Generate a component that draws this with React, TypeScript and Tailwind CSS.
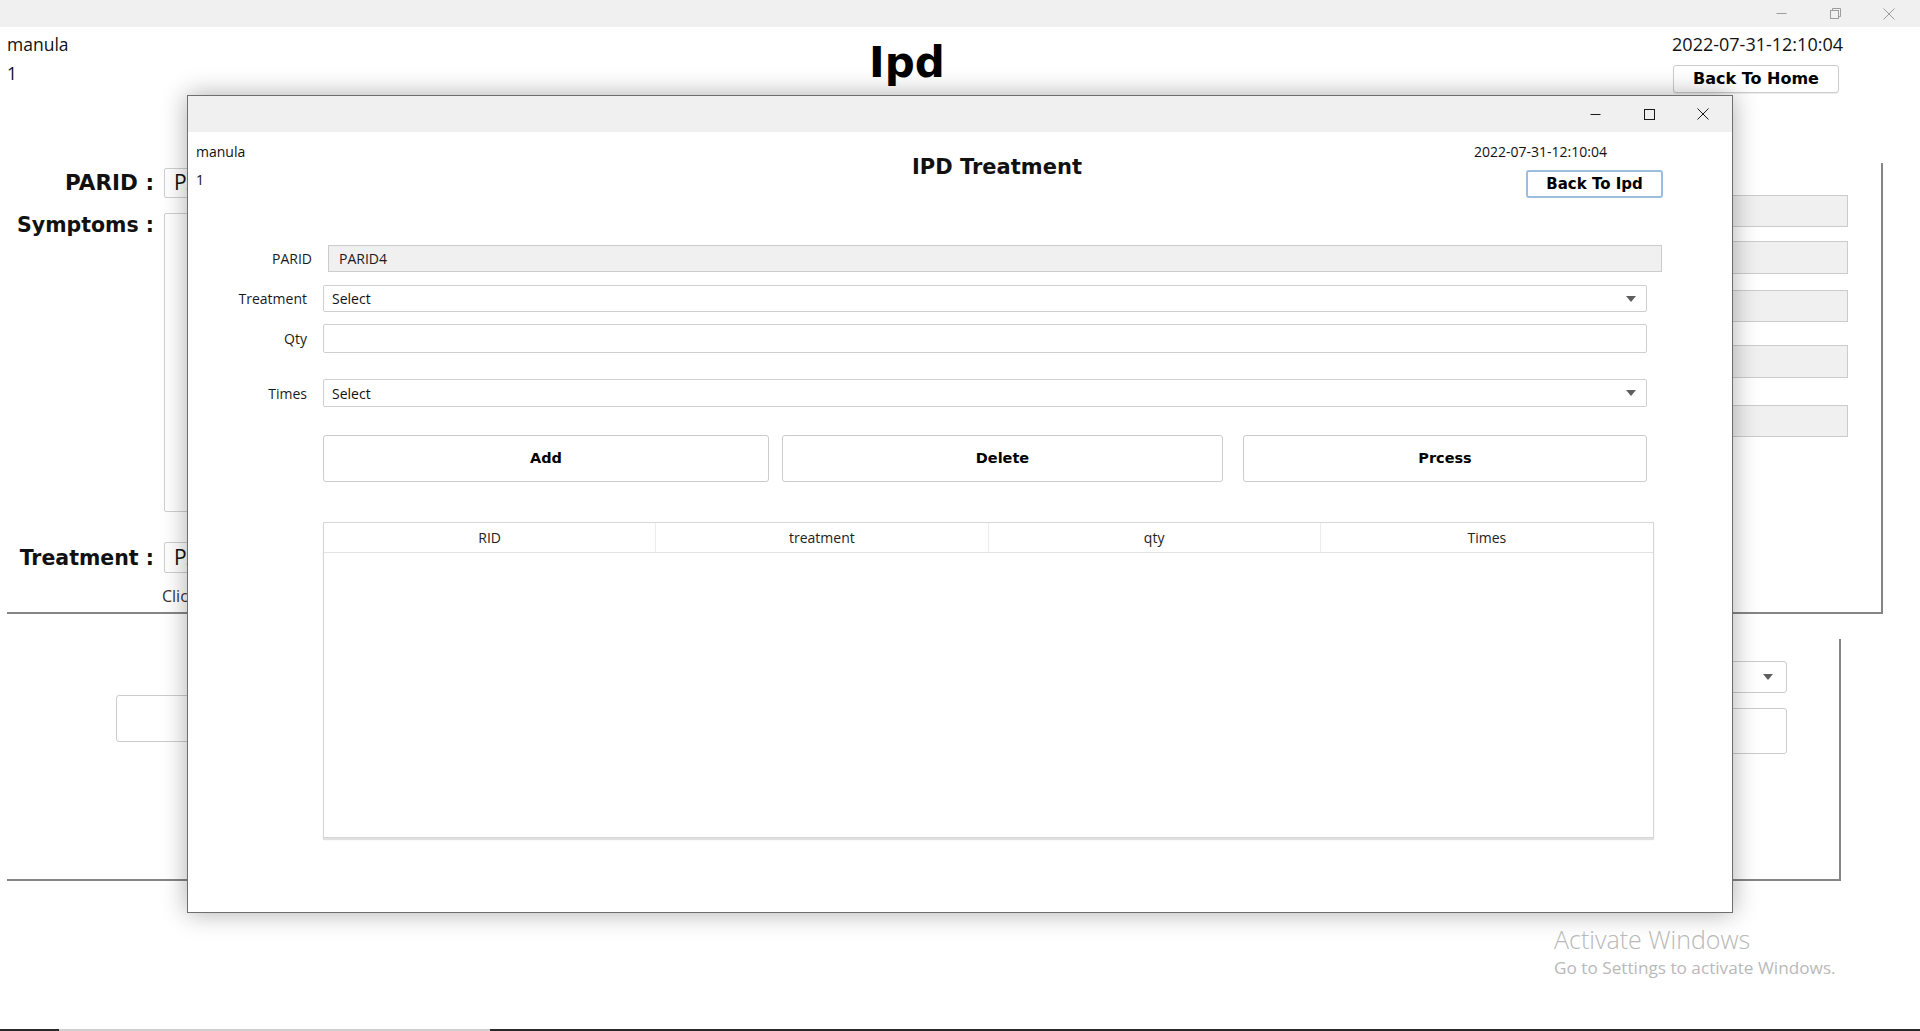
import React from 'react'

const ui = "font-['Open_Sans',sans-serif]"
const heavy = "font-['DejaVu_Sans',sans-serif] font-bold"

const Caret = () => (
    <svg width="10" height="6" viewBox="0 0 10 6">
        <path d="M0 0h10L5 6z" fill="#5e5e5e" />
    </svg>
)

// title bar buttons, grey when the window is not focused
const WinControls = ({ dim, restore }: { dim?: boolean; restore?: boolean }) => {
    const c = dim ? '#9c9c9c' : '#1a1a1a'
    return (
        <div className="flex h-full">
            <div className="w-[54px] h-full flex items-center justify-center">
                <svg width="11" height="11" viewBox="0 0 11 11">
                    <path d="M0.5 5.5h10" stroke={c} strokeWidth="1" />
                </svg>
            </div>
            <div className="w-[54px] h-full flex items-center justify-center">
                {restore ? (
                    <svg width="11" height="11" viewBox="0 0 11 11" fill="none">
                        <path d="M2.5 2.5V0.5h8v8h-2" stroke={c} strokeWidth="1" />
                        <rect x="0.5" y="2.5" width="8" height="8" stroke={c} strokeWidth="1" />
                    </svg>
                ) : (
                    <svg width="11" height="11" viewBox="0 0 11 11" fill="none">
                        <rect x="0.5" y="0.5" width="10" height="10" stroke={c} strokeWidth="1" />
                    </svg>
                )}
            </div>
            <div className="w-[54px] h-full flex items-center justify-center">
                <svg width="12" height="12" viewBox="0 0 12 12">
                    <path d="M0.5 0.5l11 11M11.5 0.5l-11 11" stroke={c} strokeWidth="1" />
                </svg>
            </div>
        </div>
    )
}

const Select = ({ w }: { w: string }) => (
    <div className={`${w} h-full ml-[16px] border border-[#cfcfcf] rounded-[2px] bg-white flex items-center justify-between pl-[8px] pr-[10px] text-[14px] text-[#111]`}>
        <span>Select</span>
        <Caret />
    </div>
)

const IpdTreatment = () => {
    const cols = ['RID', 'treatment', 'qty', 'Times']
    return (
        <div className={`${ui} absolute left-[187px] top-[95px] w-[1546px] h-[818px] border border-[#6f6f6f] bg-white shadow-[0_0_24px_rgba(0,0,0,0.32)] flex flex-col`}>
            <div className="h-[36px] bg-[#f0f0f0] flex justify-end pr-[2px]">
                <WinControls />
            </div>

            <div className="flex text-[#111]">
                <div className="w-[332px] pl-[8px] pt-[10px] text-[14px] leading-[19px]">
                    <div>manula</div>
                    <div className="mt-[9px]">1</div>
                </div>
                <div className={`${heavy} flex-1 text-center pt-[21px] text-[21px] leading-[28px]`}>IPD Treatment</div>
                <div className="w-[258px] pt-[10px] flex flex-col items-start">
                    <div className="text-[14px] leading-[19px]">2022-07-31-12:10:04</div>
                    <button className={`${heavy} mt-[9px] ml-[52px] w-[137px] h-[28px] border-2 border-[#9dbde0] rounded-[3px] bg-white text-[15px] text-black`}>
                        Back To Ipd
                    </button>
                </div>
            </div>

            <div className="flex flex-col text-[14px] text-[#1a1a1a]">
                <div className="mt-[47px] flex items-center h-[27px]">
                    <div className="w-[124px] text-right">PARID</div>
                    <div className="ml-[16px] w-[1334px] h-full bg-[#f0f0f0] border border-[#cccccc] flex items-center pl-[10px]">PARID4</div>
                </div>
                <div className="mt-[13px] flex items-center h-[27px]">
                    <div className="w-[119px] text-right">Treatment</div>
                    <Select w="w-[1324px]" />
                </div>
                <div className="mt-[12px] flex items-center h-[29px]">
                    <div className="w-[119px] text-right">Qty</div>
                    <div className="ml-[16px] w-[1324px] h-full border border-[#cfcfcf] rounded-[2px] bg-white" />
                </div>
                <div className="mt-[26px] flex items-center h-[28px]">
                    <div className="w-[119px] text-right">Times</div>
                    <Select w="w-[1324px]" />
                </div>

                <div className={`${heavy} mt-[28px] ml-[135px] flex h-[47px] text-[14.5px] text-black`}>
                    <button className="w-[446px] h-full border border-[#cccccc] rounded-[3px] bg-white">Add</button>
                    <button className="ml-[13px] w-[441px] h-full border border-[#cccccc] rounded-[3px] bg-white">Delete</button>
                    <button className="ml-[20px] w-[404px] h-full border border-[#cccccc] rounded-[3px] bg-white">Prcess</button>
                </div>

                <div className="mt-[40px] ml-[135px] w-[1331px] h-[316px] border border-[#d6d6d6] shadow-[0_2px_1px_rgba(0,0,0,0.12)] bg-white">
                    <div className="grid grid-cols-4 h-[30px] border-b border-[#e3e3e3]">
                        {cols.map((c, i) => (
                            <div key={c} className={`flex items-center justify-center text-[14px] text-[#222] ${i < 3 ? 'border-r border-[#ececec]' : ''}`}>
                                {c}
                            </div>
                        ))}
                    </div>
                </div>
            </div>
        </div>
    )
}

export default function App() {
    return (
        <div className={`${ui} relative w-[1920px] h-[1031px] overflow-hidden bg-white flex flex-col text-[#111]`}>
            <div className="h-[27px] shrink-0 bg-[#f0f0f0] flex justify-end pr-[4px]">
                <WinControls dim restore />
            </div>

            <div className="flex h-[66px] shrink-0">
                <div className="w-[869px] pl-[7px] pt-[6px] text-[17.5px] leading-[22px]">
                    <div>manula</div>
                    <div className="mt-[7px]">1</div>
                </div>
                <div className={`${heavy} pt-[11px] text-[42px] leading-[50px] text-black`}>Ipd</div>
                <div className="flex-1" />
                <div className="flex flex-col items-end pr-[77px] pt-[6px]">
                    <div className="text-[18px] leading-[22px]">2022-07-31-12:10:04</div>
                    <button className={`${heavy} mt-[10px] mr-[4px] w-[166px] h-[29px] border border-[#cdcdcd] rounded-[3px] bg-white text-[16px] text-black shadow-[0_1px_1px_rgba(0,0,0,0.08)]`}>
                        Back To Home
                    </button>
                </div>
            </div>

            {/* patient details */}
            <div className="mt-[70px] ml-[7px] w-[1876px] h-[451px] shrink-0 border-r-2 border-b-2 border-[#858585] flex justify-between">
                <div className="pt-[5px] flex flex-col">
                    <div className="flex items-center h-[30px]">
                        <div className={`${heavy} w-[147px] text-right text-[21.5px] leading-[26px]`}>PARID :</div>
                        <div className="ml-[10px] w-[520px] h-full border border-[#cfcfcf] rounded-[2px] flex items-center pl-[9px] text-[21px]">PARID4</div>
                    </div>
                    <div className="mt-[15px] flex items-start">
                        <div className={`${heavy} w-[147px] -mt-[1px] text-right text-[20.5px] leading-[26px]`}>Symptoms :</div>
                        <div className="ml-[10px] w-[520px] h-[299px] border border-[#cfcfcf] rounded-[2px]" />
                    </div>
                    <div className="mt-[30px] flex items-center h-[31px]">
                        <div className={`${heavy} w-[147px] text-right text-[20.5px] leading-[26px]`}>Treatment :</div>
                        <div className="ml-[10px] w-[520px] h-full border border-[#cfcfcf] rounded-[2px] flex items-center pl-[9px] text-[21px]">PARID4</div>
                    </div>
                    <div className="mt-[13px] ml-[155px] text-[16px] leading-[20px] text-[#333]">Click here to add treatment</div>
                </div>
                <div className="mr-[33px] flex flex-col w-[320px]">
                    <div className="mt-[32px] h-[32px] bg-[#f0f0f0] border border-[#cccccc]" />
                    <div className="mt-[14px] h-[33px] bg-[#f0f0f0] border border-[#cccccc]" />
                    <div className="mt-[16px] h-[32px] bg-[#f0f0f0] border border-[#cccccc]" />
                    <div className="mt-[23px] h-[33px] bg-[#f0f0f0] border border-[#cccccc]" />
                    <div className="mt-[27px] h-[32px] bg-[#f0f0f0] border border-[#cccccc]" />
                </div>
            </div>

            {/* admission */}
            <div className="mt-[25px] ml-[7px] w-[1834px] h-[242px] shrink-0 border-r-2 border-b-2 border-[#858585] flex justify-between">
                <div className="ml-[109px] mt-[56px] w-[380px] h-[47px] border border-[#cccccc] rounded-[3px]" />
                <div className="mr-[52px] w-[420px] flex flex-col">
                    <div className="mt-[22px] h-[32px] border border-[#cccccc] rounded-[3px] flex items-center justify-end pr-[13px]">
                        <Caret />
                    </div>
                    <div className="mt-[15px] h-[46px] border border-[#cccccc] rounded-[3px]" />
                </div>
            </div>

            <div className="mt-auto flex h-[2px] shrink-0">
                <div className="w-[59px] bg-[#2a2a2a]" />
                <div className="w-[431px] bg-[#cfcfcf]" />
                <div className="flex-1 bg-[#2a2a2a]" />
            </div>

            <IpdTreatment />

            <div className="absolute left-[1554px] top-[924px] text-[#b9b9b9] pointer-events-none">
                <div className="text-[25px] leading-[31px] font-light">Activate Windows</div>
                <div className="text-[17.2px] leading-[22px] mt-[2px]">Go to Settings to activate Windows.</div>
            </div>
        </div>
    )
}
